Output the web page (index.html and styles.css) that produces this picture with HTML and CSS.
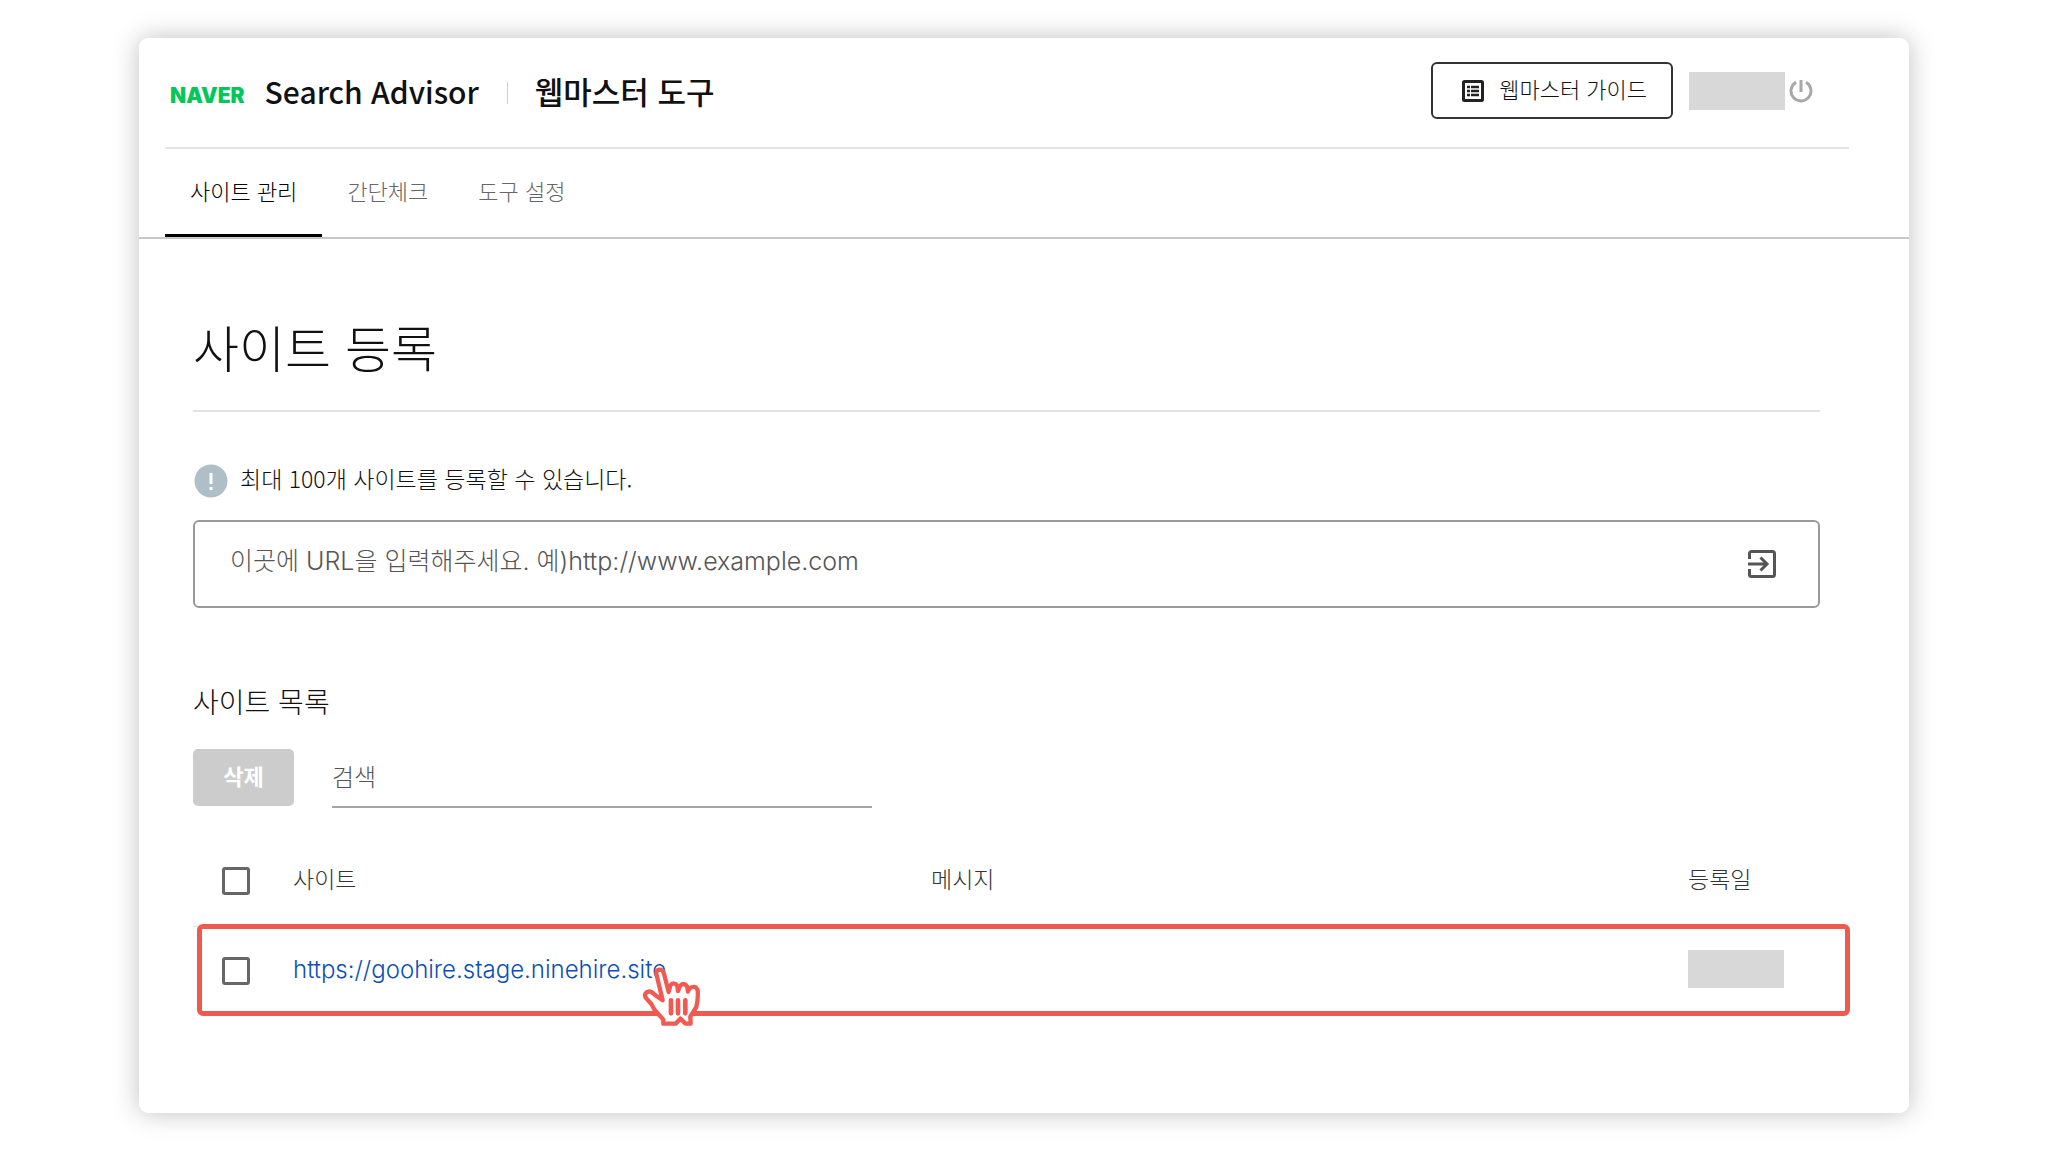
FILE: index.html
```
<!DOCTYPE html>
<html lang="ko">
<head>
  <meta charset="UTF-8">
  <title>웹마스터 도구</title>
  <link rel="stylesheet" href="styles.css">
</head>
<body>
  <div class="card">
    <header class="header">
      <a class="logo" href="#">NAVER</a>
      <a class="service" href="#">Search Advisor</a>
      <span class="divider"></span>
      <a class="tool" href="#">웹마스터 도구</a>
      <div class="header-right">
        <button class="guide-btn" type="button">
          <svg width="24" height="24" viewBox="0 0 24 24" fill="none" stroke="#222" stroke-width="3">
            <rect x="2.5" y="2.5" width="19" height="19" rx="1"/>
            <path d="M6 8h3M6 12h3M6 16h3M10 8h8M10 12h8M10 16h8" stroke-width="2.4"/>
          </svg>
          <span>웹마스터 가이드</span>
        </button>
        <span class="masked"></span>
        <button class="power-btn" type="button" aria-label="로그아웃">
          <svg width="24" height="24" viewBox="0 0 24 24" fill="none" stroke="#a8a8a8" stroke-width="3">
            <path d="M12 1v12M7 3.3a10 10 0 1 0 10 0"/>
          </svg>
        </button>
      </div>
    </header>
    <nav class="tabs">
      <a class="tab active" href="#">사이트 관리</a>
      <a class="tab" href="#">간단체크</a>
      <a class="tab" href="#">도구 설정</a>
    </nav>

    <main class="content">
      <h1>사이트 등록</h1>
      <label class="notice" for="siteUrl">
        <svg width="34" height="34" viewBox="0 0 34 34">
          <circle cx="17" cy="17" r="16.5" fill="#afbfc8"/>
          <path d="M17 9v11M17 23v3" stroke="#fff" stroke-width="3"/>
        </svg>
        <span>최대 100개 사이트를 등록할 수 있습니다.</span>
      </label>
      <div class="url-box">
        <input type="text" id="siteUrl" placeholder="이곳에 URL을 입력해주세요. 예)http://www.example.com">
        <button class="submit-btn" type="button" aria-label="등록">
          <svg width="30" height="30" viewBox="0 0 30 30" fill="none" stroke="#555" stroke-width="3">
            <path d="M2.5 10V4.500a2 2 0 0 1 2-2h21a2 2 0 0 1 2 2v21a2 2 0 0 1-2 2h-21a2 2 0 0 1-2-2V20"/>
            <path d="M1 15h19M13.500 8.500l6.500 6.500-6.500 6.500"/>
          </svg>
        </button>
      </div>

      <h2>사이트 목록</h2>
      <div class="toolbar">
        <button class="delete-btn" type="button" disabled>삭제</button>
        <input class="search" type="text" placeholder="검색" aria-label="검색">
      </div>

      <div class="table-wrap">
        <table class="site-table">
          <thead>
            <tr>
              <th class="col-check"><input type="checkbox" aria-label="전체 선택"></th>
              <th class="col-site">사이트</th>
              <th>메시지</th>
              <th class="col-date">등록일</th>
            </tr>
          </thead>
          <tbody>
            <tr>
              <td class="col-check"><input type="checkbox" aria-label="사이트 선택"></td>
              <td><a class="site-link" href="#">https://goohire.stage.ninehire.site</a></td>
              <td></td>
              <td><span class="masked"></span></td>
            </tr>
          </tbody>
        </table>
        <div class="highlight"></div>
        <svg class="hand" width="60" height="64" viewBox="66 76 180 192">
          <path d="M128 182 L110 107 Q106 91 119 90 Q129 90 132 102 L146 157 L151 138 Q160 124 172 138 L174 154 L180 139 Q191 126 202 141 L204 156 L208 147 Q226 134 233 152 Q235 178 229 202 L211 231 L212 252 H197 L181 237 L167 252 H130 V240 L104 211 L94 193 L77 174 Q71 158 88 155 Q95 155 104 165 Z" fill="#fff" stroke="#f05a50" stroke-width="13" stroke-linejoin="round"/>
          <path d="M153 182v39M174 182v39M196 182v39" fill="none" stroke="#f05a50" stroke-width="14" stroke-linecap="round"/>
        </svg>
      </div>
    </main>
  </div>
</body>
</html>
```
FILE: styles.css
```
* {
  margin: 0;
  padding: 0;
  box-sizing: border-box;
}
body {
  font-family: "Noto Sans CJK KR", sans-serif;
  font-size: 22px;
  font-weight: 300;
  line-height: 32px;
  color: #111;
  background: #fff;
  padding: 38px 139px;
}
a {
  color: inherit;
  text-decoration: none;
}
button, input {
  font: inherit;
  color: inherit;
  background: none;
  border: none;
}
svg {
  display: block;
}
.card {
  background: #fff;
  border-radius: 9px;
  box-shadow: 0 0 26px rgba(0, 0, 0, 0.25);
}

/* header */
.header {
  display: flex;
  align-items: center;
  height: 111px;
  margin: 0 60px 0 26px;
  padding: 0 36px 4px 5px;
  border-bottom: 2px solid #e5e5e5;
}
.logo {
  font-family: Inter, sans-serif;
  font-size: 21px;
  font-weight: 900;
  color: #03c75a;
  padding-top: 10px;
}
.service {
  font-size: 30px;
  font-weight: 500;
  margin-left: 20px;
}
.divider {
  width: 1px;
  height: 22px;
  background: #ccc;
  margin: 4px 27px 0 28px;
}
.tool {
  font-size: 31px;
  font-weight: 500;
}
.header-right {
  display: flex;
  align-items: center;
  margin-left: auto;
}
.guide-btn {
  display: flex;
  align-items: center;
  gap: 14px;
  height: 57px;
  padding: 0 24px 0 28px;
  border: 2px solid #333;
  border-radius: 6px;
  margin-right: 16px;
}
.guide-btn span, .notice span {
  padding-bottom: 6px;
}
.masked {
  display: block;
  width: 96px;
  height: 38px;
  background: #d8d8d8;
}
.power-btn {
  margin-left: 4px;
}

/* tabs */
.tabs {
  display: flex;
  padding-left: 26px;
  border-bottom: 2px solid #c8c8c8;
}
.tab {
  height: 88px;
  padding: 25px 25px 0;
  color: #666;
}
.tab.active {
  color: #000;
  border-bottom: 3px solid #000;
}

/* content */
.content {
  padding: 73px 89px 97px 54px;
}
h1 {
  font-size: 50px;
  font-weight: 300;
  line-height: 68px;
  padding-bottom: 30px;
  border-bottom: 2px solid #e2e2e2;
}
.notice {
  display: flex;
  align-items: center;
  gap: 12px;
  font-size: 23px;
  margin-top: 50px;
  padding-left: 1px;
}
.url-box {
  display: flex;
  align-items: center;
  height: 88px;
  margin-top: 20px;
  padding: 0 41px 0 35px;
  border: 2px solid #999;
  border-radius: 6px;
}
.url-box input {
  flex: 1;
  height: 44px;
  font-size: 25px;
  font-family: Inter, "Noto Sans CJK KR", sans-serif;
  padding-bottom: 6px;
  outline: none;
}
::placeholder {
  color: #555;
  opacity: 1;
}
h2 {
  font-size: 28px;
  font-weight: 300;
  line-height: 40px;
  margin-top: 73px;
}
.toolbar {
  display: flex;
  gap: 38px;
  margin-top: 28px;
}
.delete-btn {
  width: 101px;
  height: 57px;
  font-weight: 700;
  color: #fff;
  background: #ccc;
  border-radius: 5px;
  padding-bottom: 6px;
}
.search {
  width: 540px;
  height: 59px;
  font-size: 24px;
  padding-bottom: 4px;
  border-bottom: 2px solid #a5a5a5;
  outline: none;
}

/* site table */
.table-wrap {
  position: relative;
  margin-top: 28px;
}
.site-table {
  width: 100%;
  table-layout: fixed;
  border-collapse: collapse;
}
.site-table th {
  height: 90px;
  font-size: 23px;
  font-weight: 300;
  text-align: left;
  color: #333;
  padding-bottom: 6px;
  border-bottom: 1px solid #e2e2e2;
}
.site-table td {
  height: 90px;
  padding-bottom: 4px;
}
.site-table .col-check {
  width: 100px;
  padding-bottom: 0;
}
.col-site {
  width: 638px;
}
.col-date {
  width: 132px;
}
input[type="checkbox"] {
  appearance: none;
  display: block;
  width: 28px;
  height: 28px;
  margin-left: 29px;
  border: 3px solid #666;
  border-radius: 3px;
}
.site-link {
  font-family: Inter, sans-serif;
  font-size: 24px;
  color: #0b4fb8;
}
.highlight {
  position: absolute;
  left: 4px;
  right: -30px;
  bottom: 0;
  height: 92px;
  border: 5px solid #ee5a50;
  border-radius: 6px;
  pointer-events: none;
}
.hand {
  position: absolute;
  left: 449px;
  bottom: -13px;
}
```
